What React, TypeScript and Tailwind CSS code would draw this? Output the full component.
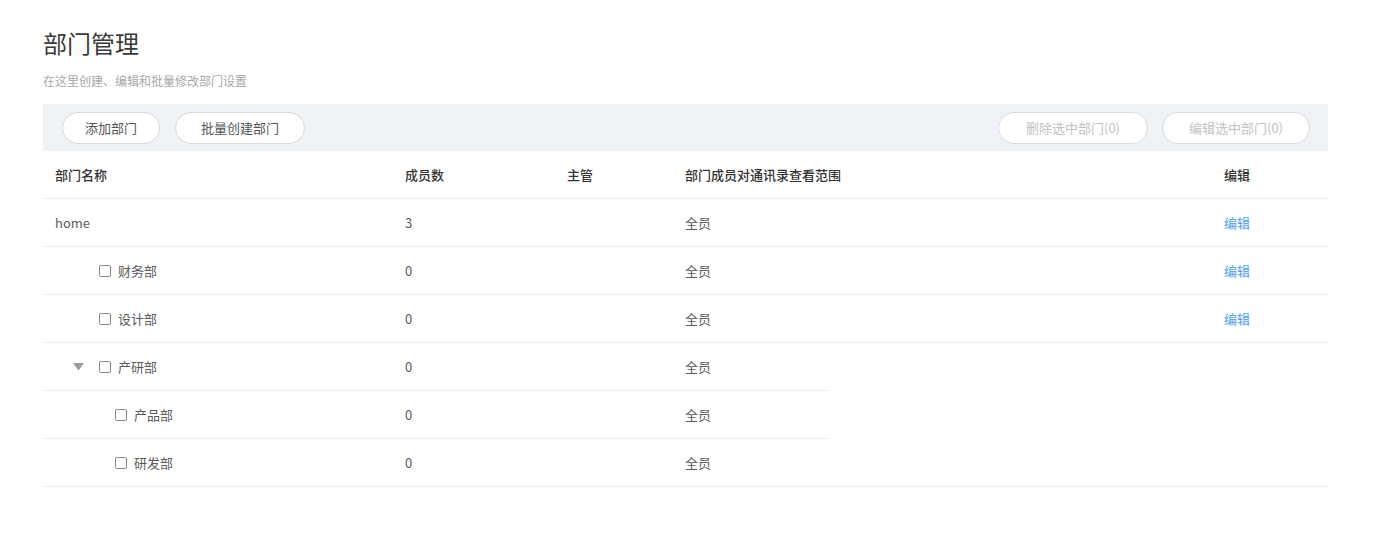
import React from "react";

const font = { fontFamily: '"Noto Sans CJK SC", "Noto Sans", sans-serif' };

function Checkbox() {
  return <span className="inline-block w-[12px] h-[12px] border border-[#8a8a8a] rounded-[2px] bg-white mr-[7px] shrink-0" />;
}

type Row = { name: string; count: string; indent: number; caret?: boolean; check?: boolean; edit: boolean; partial?: boolean };

const rows: Row[] = [
  { name: "home", count: "3", indent: 0, edit: true },
  { name: "财务部", count: "0", indent: 44, check: true, edit: true },
  { name: "设计部", count: "0", indent: 44, check: true, edit: true },
  { name: "产研部", count: "0", indent: 18, caret: true, check: true, edit: false, partial: true },
  { name: "产品部", count: "0", indent: 60, check: true, edit: false, partial: true },
  { name: "研发部", count: "0", indent: 60, check: true, edit: false },
];

export default function App() {
  return (
    <div className="w-[1396px] h-[540px] bg-white overflow-hidden" style={font}>
      <div className="ml-[43px] w-[1285px] pt-[28px]">
        <h1 className="text-[24px] leading-[30px] text-[#3a3a3a] font-normal">部门管理</h1>
        <p className="mt-[15px] text-[12px] leading-[16px] text-[#a8a8a8]">在这里创建、编辑和批量修改部门设置</p>
        <div className="mt-[15px] h-[47px] bg-[#eff2f6] flex items-center justify-between pl-[19px] pr-[18px]">
          <div className="flex gap-[15px]">
            <button className="h-[32px] w-[98px] rounded-full border border-[#d9d9d9] bg-white text-[13px] text-[#555]">添加部门</button>
            <button className="h-[32px] w-[130px] rounded-full border border-[#d9d9d9] bg-white text-[13px] text-[#555]">批量创建部门</button>
          </div>
          <div className="flex gap-[14px]">
            <button className="h-[32px] w-[150px] rounded-full border border-[#dcdcdc] bg-white text-[13px] text-[#c2c2c2]">删除选中部门(0)</button>
            <button className="h-[32px] w-[148px] rounded-full border border-[#dcdcdc] bg-white text-[13px] text-[#c2c2c2]">编辑选中部门(0)</button>
          </div>
        </div>
        <div className="grid grid-cols-[350px_162px_118px_539px_116px] h-[48px] items-center border-b border-[#ececec] text-[13px] text-[#333] font-medium">
          <div className="pl-[12px]">部门名称</div>
          <div className="pl-[12px]">成员数</div>
          <div className="pl-[12px]">主管</div>
          <div className="pl-[12px]">部门成员对通讯录查看范围</div>
          <div className="pl-[12px]">编辑</div>
        </div>
        {rows.map((r, i) => (
          <div key={i}>
            <div className="grid grid-cols-[350px_162px_118px_539px_116px] h-[47px] items-center text-[13px] text-[#5a5a5a]">
              <div className="pl-[12px] flex items-center">
                <span style={{ width: r.indent }} className="shrink-0" />
                {r.caret && (
                  <svg width="11" height="8" viewBox="0 0 11 8" className="shrink-0 mr-[15px]">
                    <path d="M0 0 L11 0 L5.5 7.5 Z" fill="#9a9a9a" />
                  </svg>
                )}
                {r.check && <Checkbox />}
                <span>{r.name}</span>
              </div>
              <div className="pl-[12px]">{r.count}</div>
              <div className="pl-[12px]"></div>
              <div className="pl-[12px]">全员</div>
              <div className="pl-[12px]">{r.edit && <span className="text-[#4a9ff5]">编辑</span>}</div>
            </div>
            <div className={r.partial ? "h-px w-[786px] bg-[#ececec]" : "h-px w-full bg-[#ececec]"} />
          </div>
        ))}
      </div>
    </div>
  );
}
